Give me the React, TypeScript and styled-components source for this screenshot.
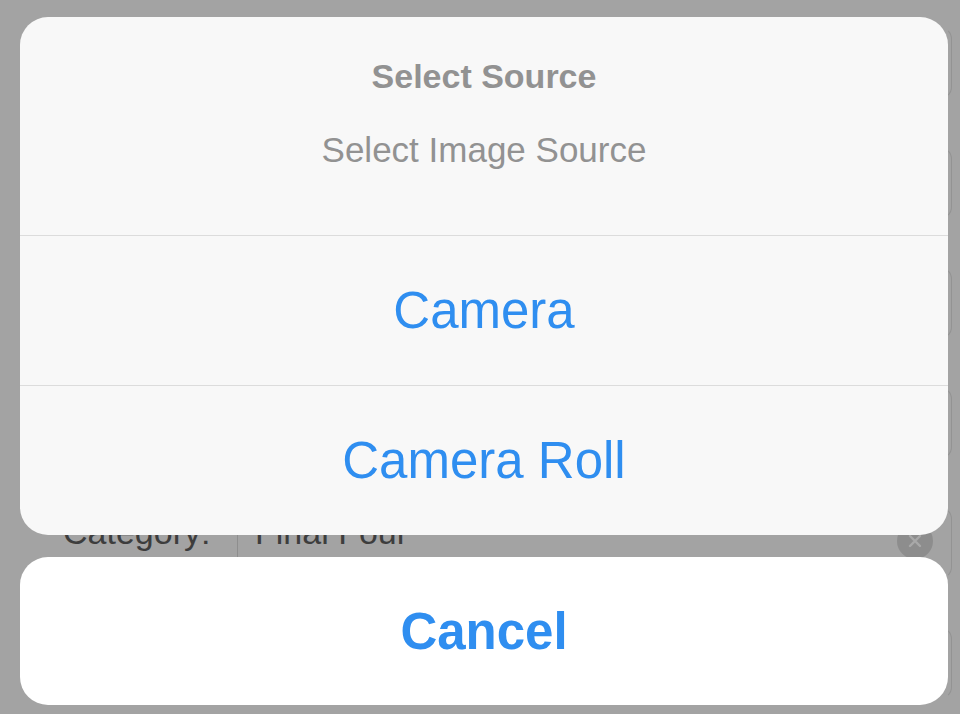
import React from "react";
import styled, { createGlobalStyle } from "styled-components";

const GlobalStyle = createGlobalStyle`
  html, body {
    margin: 0;
    padding: 0;
    background: #a3a3a3;
  }
  body {
    font-family: "Liberation Sans", Arial, Helvetica, sans-serif;
  }
`;

interface Field {
  label: string;
  value: string;
}

const fields: Field[] = [
  { label: "Name:", value: "" },
  { label: "Team:", value: "" },
  { label: "Date:", value: "" },
  { label: "Venue:", value: "" },
  { label: "Category:", value: "Final Four" },
  { label: "Notes:", value: "" },
];

const Screen = styled.div`
  position: relative;
  width: 960px;
  height: 714px;
  overflow: hidden;
  background: #a3a3a3;
`;

const Form = styled.div`
  display: flex;
  flex-direction: column;
  gap: 48px;
  padding: 27px 8px 0 40px;
`;

const FieldRow = styled.div`
  display: flex;
  align-items: center;
  height: 70px;
  border: 1px solid transparent;
  border-right-color: #939393;
  border-radius: 12px;
`;

const FieldLabel = styled.span`
  width: 196px;
  padding-left: 22px;
  margin-bottom: 22px;
  box-sizing: border-box;
  font-size: 34px;
  color: #3d3d3d;
`;

const Divider = styled.span`
  align-self: stretch;
  width: 1px;
  background: #8e8e8e;
`;

const FieldValue = styled.span`
  flex: 1;
  padding-left: 17px;
  margin-bottom: 22px;
  font-size: 34px;
  color: #3d3d3d;
`;

const ClearButton = styled.span`
  display: flex;
  align-items: center;
  justify-content: center;
  width: 36px;
  height: 36px;
  margin-right: 18px;
  margin-bottom: 4px;
  border-radius: 50%;
  background: #8d8d8d;
`;

const Sheet = styled.div`
  position: absolute;
  inset: 0;
  display: flex;
  flex-direction: column;
  gap: 22px;
  padding: 17px 12px 9px 20px;
`;

const Group = styled.div`
  display: flex;
  flex-direction: column;
  background: #f8f8f8;
  border-radius: 28px;
  overflow: hidden;
`;

const Header = styled.div`
  display: flex;
  flex-direction: column;
  align-items: center;
  height: 218px;
  padding-top: 39px;
  box-sizing: border-box;
  gap: 34px;
`;

const Title = styled.div`
  font-size: 34px;
  line-height: 40px;
  font-weight: 700;
  color: #929292;
`;

const Message = styled.div`
  font-size: 35px;
  line-height: 40px;
  color: #929292;
`;

const Action = styled.button<{ $bold?: boolean; $height: number }>`
  display: flex;
  align-items: center;
  justify-content: center;
  height: ${(p) => p.$height}px;
  margin: 0;
  padding: 0;
  border: none;
  border-top: 1px solid #dcdcdc;
  background: transparent;
  font-family: inherit;
  font-size: 51px;
  font-weight: ${(p) => (p.$bold ? 700 : 400)};
  color: #2f8ef0;
  cursor: pointer;
`;

const CancelCard = styled.div`
  display: flex;
  flex-direction: column;
  background: #ffffff;
  border-radius: 28px;
  overflow: hidden;

  ${Action} {
    border-top: none;
  }
`;

const ClearIcon = () => (
  <svg width="16" height="16" viewBox="0 0 16 16">
    <path d="M3 3 L13 13 M13 3 L3 13" stroke="#a9a9a9" strokeWidth="2.4" strokeLinecap="round" />
  </svg>
);

const App: React.FC = () => {
  return (
    <>
      <GlobalStyle />
      <Screen>
        <Form>
          {fields.map((f) => (
            <FieldRow key={f.label}>
              <FieldLabel>{f.label}</FieldLabel>
              <Divider />
              <FieldValue>{f.value}</FieldValue>
              {f.value && (
                <ClearButton>
                  <ClearIcon />
                </ClearButton>
              )}
            </FieldRow>
          ))}
        </Form>

        <Sheet>
          <Group>
            <Header>
              <Title>Select Source</Title>
              <Message>Select Image Source</Message>
            </Header>
            <Action $height={150}>Camera</Action>
            <Action $height={150}>Camera Roll</Action>
          </Group>
          <CancelCard>
            <Action $bold $height={148}>Cancel</Action>
          </CancelCard>
        </Sheet>
      </Screen>
    </>
  );
};

export default App;
